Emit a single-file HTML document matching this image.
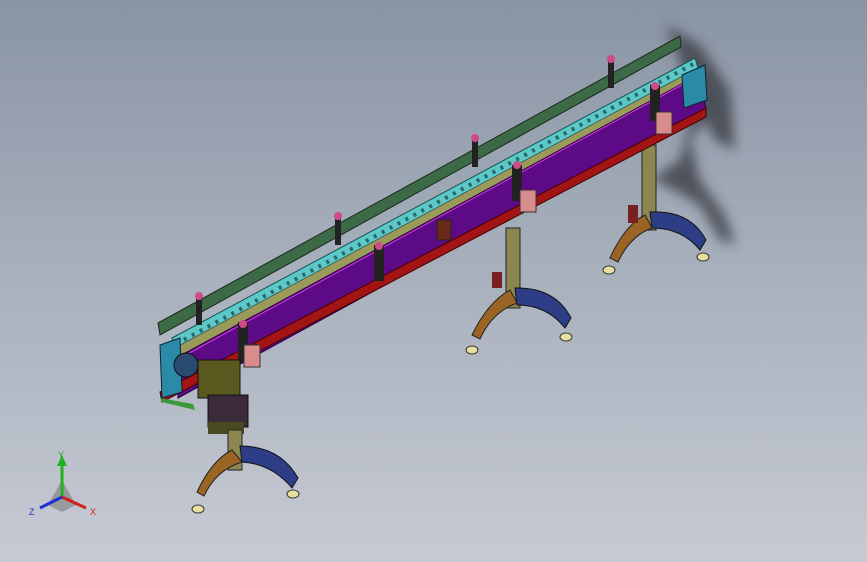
<!DOCTYPE html>
<html><head><style>
html,body{margin:0;padding:0}
body{width:867px;height:562px;overflow:hidden;background:linear-gradient(180deg,#8994a4 0%,#a9b1bd 50%,#c6cad3 100%);font-family:"Liberation Sans",sans-serif}
svg{position:absolute;left:0;top:0}
</style></head><body>
<svg width="867" height="562" viewBox="0 0 867 562">
<defs><filter id="b"><feGaussianBlur stdDeviation="6"/></filter></defs>
<g filter="url(#b)" fill="#3a3e44" opacity="0.8">
<path d="M665 25 L700 45 L730 90 L735 150 L715 140 L705 120 L690 140 L700 180 L725 215 L735 245 L720 240 L700 205 L665 185 L650 180 L680 160 L690 120 L680 60 Z"/>
</g>
<!-- leg3 -->
<rect x="642" y="145" width="14" height="85" fill="#8c8650" stroke="#222"/>
<path d="M650 212 Q690 210 706 240 L700 250 Q682 228 652 228 Z" fill="#2d3e86" stroke="#111"/>
<path d="M645 215 Q625 225 610 258 L618 262 Q630 236 652 228 Z" fill="#9a6425" stroke="#222"/>
<rect x="628" y="205" width="10" height="18" fill="#7a2020"/>
<ellipse cx="609" cy="270" rx="6" ry="4" fill="#e8e0a0" stroke="#333"/>
<ellipse cx="703" cy="257" rx="6" ry="4" fill="#e8e0a0" stroke="#333"/>
<!-- leg2 -->
<rect x="506" y="228" width="14" height="80" fill="#8c8650" stroke="#222"/>
<path d="M515 288 Q555 287 571 318 L565 328 Q547 305 517 305 Z" fill="#2d3e86" stroke="#111"/>
<path d="M510 290 Q488 302 472 335 L480 339 Q492 312 517 303 Z" fill="#9a6425" stroke="#222"/>
<rect x="492" y="272" width="10" height="16" fill="#7a2020"/>
<ellipse cx="472" cy="350" rx="6" ry="4" fill="#e8e0a0" stroke="#333"/>
<ellipse cx="566" cy="337" rx="6" ry="4" fill="#e8e0a0" stroke="#333"/>
<!-- green back rail -->
<polygon points="158,323 680,36 681,47 160,335" fill="#3c6a46" stroke="#1a2a1c"/>
<!-- chain -->
<polygon points="172,338 695,58 698,68 175,348" fill="#5cc8c8" stroke="#1a5050"/>
<path d="M176 344 L695 63" stroke="#2a6868" stroke-width="4" stroke-dasharray="3 6"/>
<polygon points="175,348 698,68 700,76 178,357" fill="#9a9a5a" stroke="#444" stroke-width="0.5"/>
<!-- purple plate -->
<polygon points="178,357 700,74 706,110 178,398" fill="#5d0a86" stroke="#2a0040"/>
<line x1="180" y1="358" x2="700" y2="75" stroke="#d040e0" stroke-width="1"/>
<!-- red base strip -->
<polygon points="160,392 706,108 706,117 162,402" fill="#a31414" stroke="#400"/>
<polygon points="160,398 162,402 195,410 193,404" fill="#3a9a3a"/>
<!-- end plates -->
<polygon points="160,345 180,338 182,392 162,398" fill="#2a8aa8" stroke="#123"/>
<circle cx="186" cy="365" r="12" fill="#2a4a70" stroke="#111"/>
<polygon points="682,75 705,65 707,100 684,108" fill="#2a8aa8" stroke="#123"/>
<!-- brackets -->
<g fill="#222">
<rect x="196" y="295" width="6" height="30"/><rect x="335" y="215" width="6" height="30"/>
<rect x="472" y="137" width="6" height="30"/><rect x="608" y="58" width="6" height="30"/>
<rect x="238" y="322" width="10" height="40"/><rect x="374" y="245" width="10" height="36"/>
<rect x="512" y="165" width="10" height="36"/><rect x="650" y="85" width="10" height="36"/>
</g>
<g fill="#d04a8a"><circle cx="199" cy="296" r="4"/><circle cx="338" cy="216" r="4"/><circle cx="475" cy="138" r="4"/><circle cx="611" cy="59" r="4"/>
<circle cx="243" cy="324" r="4"/><circle cx="379" cy="246" r="4"/><circle cx="517" cy="165" r="4"/><circle cx="655" cy="86" r="4"/></g>
<g fill="#d88c8c" stroke="#333"><rect x="244" y="345" width="16" height="22"/><rect x="520" y="190" width="16" height="22"/><rect x="656" y="112" width="16" height="22"/></g>
<rect x="437" y="220" width="14" height="20" fill="#6a2a1a" stroke="#222"/>
<!-- motor -->
<rect x="198" y="360" width="42" height="38" fill="#5a5a20" stroke="#111"/>
<rect x="208" y="395" width="40" height="32" fill="#3a2a3a" stroke="#111"/>
<rect x="208" y="422" width="36" height="12" fill="#4a4a20"/>
<!-- leg1 -->
<rect x="228" y="430" width="14" height="40" fill="#8c8650" stroke="#222"/>
<path d="M240 446 Q280 446 298 478 L292 488 Q272 464 242 462 Z" fill="#2d3e86" stroke="#111"/>
<path d="M232 450 Q212 460 197 492 L204 496 Q216 470 242 462 Z" fill="#9a6425" stroke="#222"/>
<ellipse cx="198" cy="509" rx="6" ry="4" fill="#e8e0a0" stroke="#333"/>
<ellipse cx="293" cy="494" rx="6" ry="4" fill="#e8e0a0" stroke="#333"/>
<!-- triad -->
<polygon points="48,505 62,480 76,505 62,512" fill="#888" opacity="0.7"/>
<line x1="62" y1="497" x2="62" y2="462" stroke="#20b020" stroke-width="3"/>
<polygon points="57,466 62,455 67,466" fill="#20b020"/>
<line x1="62" y1="497" x2="86" y2="508" stroke="#d02020" stroke-width="3"/>
<line x1="62" y1="497" x2="40" y2="508" stroke="#2030d0" stroke-width="3"/>
<text x="58" y="458" font-size="9" fill="#20a020">Y</text>
<text x="90" y="515" font-size="9" fill="#d02020">X</text>
<text x="29" y="515" font-size="9" fill="#2030d0">Z</text>
</svg>
</body></html>
